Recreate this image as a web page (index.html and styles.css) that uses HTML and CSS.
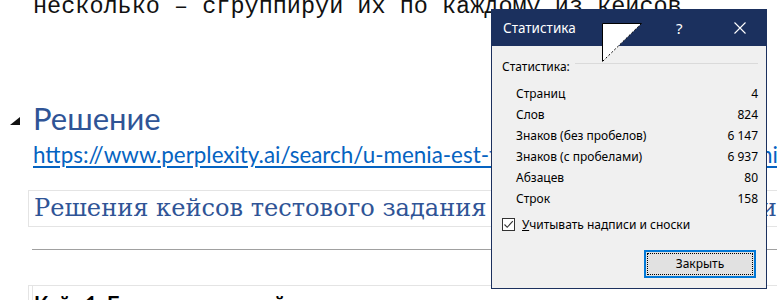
FILE: index.html
```html
<!DOCTYPE html>
<html>
<head>
    <title>Статистика</title>
    <link rel="stylesheet" href="styles.css">
</head>
<body>
    <div class="page">
        <div class="mono-line">несколько – сгруппируй их по каждому из кейсов</div>

        <div class="heading-row">
            <span class="collapse-mark"></span>
            <h1>Решение</h1>
        </div>
        <a class="doc-link" href="#">https://www.perplexity.ai/search/u-menia-est-testovoe-zadanie-ot-kompanii-7nV/w</a>

        <div class="title-box">
            <div class="title-text">Решения кейсов тестового задания для компании в Росси</div>
        </div>

        <div class="rule"></div>

        <div class="case-box">
            <div class="case-title">Кейс 1. Безответственный подрядчик</div>
        </div>
    </div>

    <div class="dialog">
        <div class="dialog-titlebar">
            <span class="dialog-caption">Статистика</span>
            <span class="tb-help">?</span>
            <span class="tb-close">
                <svg width="12" height="12" viewBox="0 0 12 12"><path d="M0.5 0.5 L11.5 11.5 M11.5 0.5 L0.5 11.5" stroke="#fff" stroke-width="1.1" fill="none"/></svg>
            </span>
        </div>
        <div class="dialog-body">
            <div class="group-head">
                <span>Статистика:</span>
                <span class="group-line"></span>
            </div>
            <div class="stats">
                <div class="stat-row"><span>Страниц</span><span>4</span></div>
                <div class="stat-row"><span>Слов</span><span>824</span></div>
                <div class="stat-row"><span>Знаков (без пробелов)</span><span>6 147</span></div>
                <div class="stat-row"><span>Знаков (с пробелами)</span><span>6 937</span></div>
                <div class="stat-row"><span>Абзацев</span><span>80</span></div>
                <div class="stat-row"><span>Строк</span><span>158</span></div>
            </div>
            <label class="check-row">
                <span class="checkbox">
                    <svg width="11" height="11" viewBox="0 0 11 11"><path d="M1.5 5.5 L4.2 8.3 L9.8 2.2" stroke="#333" stroke-width="1.1" fill="none"/></svg>
                </span>
                <span><u>У</u>читывать надписи и сноски</span>
            </label>
            <div class="button-row">
                <button class="close-btn"><span>Закрыть</span></button>
            </div>
        </div>
    </div>

    <svg class="cursor-tri" width="41" height="40" viewBox="0 0 41 40">
        <polygon points="0.5,0.5 39.5,0.5 0.5,38.5" fill="#fff"/>
        <path d="M0.5 38.5 L0.5 0.5 L39.5 0.5" stroke="#000" stroke-width="1" fill="none"/>
        <path d="M39.5 0.5 L0.5 38.5" stroke="#000" stroke-width="1" stroke-dasharray="2 2" fill="none"/>
    </svg>
</body>
</html>
```

FILE: styles.css
```css
body {
    margin: 0;
    width: 777px;
    height: 300px;
    overflow: hidden;
    background: #fff;
    position: relative;
}
.page {
    padding-left: 33px;
    white-space: nowrap;
    overflow: hidden;
}
.mono-line {
    font-family: "Liberation Mono", monospace;
    font-size: 23.5px;
    line-height: 27px;
    margin-top: -7px;
    color: #111;
}
.heading-row {
    display: flex;
    align-items: center;
    margin-top: 78px;
    position: relative;
}
.collapse-mark {
    position: absolute;
    left: -23px;
    top: 19px;
    width: 0;
    height: 0;
    border-left: 10px solid transparent;
    border-bottom: 8px solid #111;
}
h1 {
    margin: 0;
    font-family: Lato, sans-serif;
    font-weight: 400;
    font-size: 31px;
    line-height: 40px;
    color: #2f5496;
}
.doc-link {
    display: block;
    margin-top: 4px;
    font-family: Lato, sans-serif;
    font-size: 22.4px;
    line-height: 26px;
    color: #0563c1;
    text-decoration: underline;
    text-underline-offset: 3px;
}
.title-box {
    margin-top: 22px;
    margin-left: -5px;
    border: 1px solid #e4e4e4;
    border-right: none;
    height: 35px;
    padding-left: 5px;
}
.title-text {
    font-family: "DejaVu Serif", serif;
    font-size: 24.1px;
    line-height: 34px;
    color: #2f5496;
}
.rule {
    margin-top: 22px;
    margin-left: -1px;
    height: 1px;
    background: #a0a0a0;
}
.case-box {
    margin-top: 35px;
    margin-left: -5px;
    border-top: 1px solid #e4e4e4;
    border-left: 1px solid #e4e4e4;
    padding: 0 0 0 3px;
}
.case-title {
    border-left: 1px solid #e4e4e4;
    padding-left: 1px;
    font-family: Lato, sans-serif;
    font-weight: bold;
    font-size: 20.5px;
    line-height: 20px;
    padding-top: 7px;
    color: #000;
}

.dialog {
    position: absolute;
    left: 491px;
    top: 9px;
    width: 274px;
    height: 279px;
    border: 1px solid #1b305e;
    border-top: none;
    background: #f0f0f0;
    font-family: "Noto Sans", sans-serif;
    font-size: 12px;
    color: #000;
}
.dialog-titlebar {
    height: 37px;
    background: #1b305e;
    color: #fff;
    display: flex;
    align-items: center;
    padding-left: 11px;
}
.dialog-caption {
    font-size: 13.5px;
    flex: 1;
}
.tb-help {
    font-size: 15px;
    width: 58px;
    text-align: left;
}
.tb-close {
    width: 32px;
    display: flex;
    margin-top: 1px;
}
.dialog-body {
    padding: 11px 8px 0 10px;
}
.group-head {
    display: flex;
    align-items: center;
    gap: 5px;
    height: 18px;
}
.group-line {
    flex: 1;
    height: 1px;
    background: #dadada;
    margin-top: -6px;
}
.stats {
    margin-top: 8px;
    padding-left: 14px;
}
.stat-row {
    display: flex;
    justify-content: space-between;
    height: 21px;
    line-height: 21px;
}
.check-row {
    display: flex;
    align-items: center;
    gap: 7px;
    margin-top: 6px;
    height: 18px;
}
.checkbox {
    width: 11px;
    height: 11px;
    border: 1px solid #333;
    background: #fff;
    display: flex;
}
.button-row {
    display: flex;
    justify-content: flex-end;
    margin-top: 17px;
    padding-right: 2px;
}
.close-btn {
    width: 112px;
    height: 28px;
    border: 2px solid #0078d7;
    background: #e1e1e1;
    padding: 1px;
    font-family: "Noto Sans", sans-serif;
    font-size: 12px;
    color: #000;
    display: flex;
}
.close-btn span {
    flex: 1;
    border: 1px dotted #000;
    line-height: 20px;
}
.cursor-tri {
    position: absolute;
    left: 602px;
    top: 23px;
}
```
